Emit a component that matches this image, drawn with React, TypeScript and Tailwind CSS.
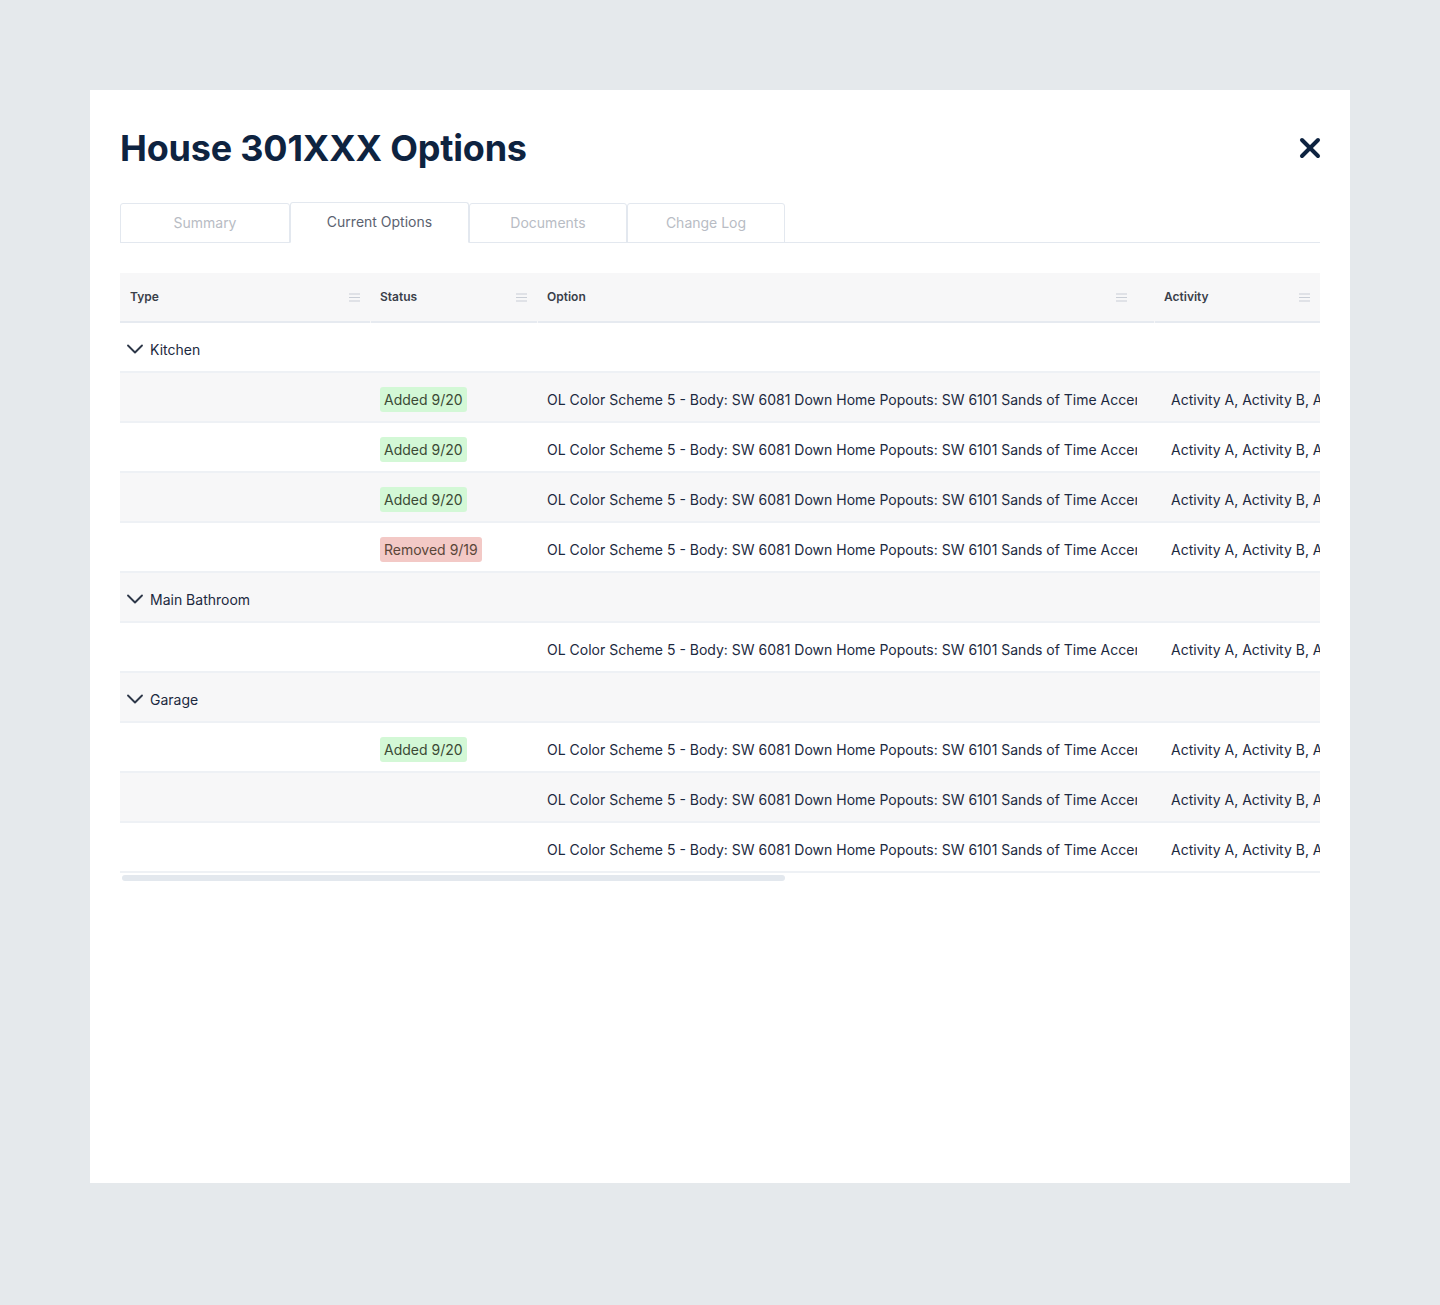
import { ChevronDown, X } from 'lucide-react'

type Row = { status?: 'added' | 'removed'; date?: string }
type Group = { name: string; rows: Row[] }

const OPTION =
  'OL Color Scheme 5 - Body: SW 6081 Down Home Popouts: SW 6101 Sands of Time Accent: SW 7019 Gauntlet Gray Trim: SW 7006 Extra White'
const ACTIVITY = 'Activity A, Activity B, Activity C'

const groups: Group[] = [
  {
    name: 'Kitchen',
    rows: [
      { status: 'added', date: '9/20' },
      { status: 'added', date: '9/20' },
      { status: 'added', date: '9/20' },
      { status: 'removed', date: '9/19' },
    ],
  },
  { name: 'Main Bathroom', rows: [{}] },
  { name: 'Garage', rows: [{ status: 'added', date: '9/20' }, {}, {}] },
]

const tabs = [
  { label: 'Summary', w: 'w-[170px]' },
  { label: 'Current Options', w: 'w-[179px]', active: true },
  { label: 'Documents', w: 'w-[158px]' },
  { label: 'Change Log', w: 'w-[158px]' },
]

function MenuIcon() {
  return (
    <svg width="11" height="9" viewBox="0 0 11 9" className="text-[#c9ced6]">
      <path d="M0 1h11M0 4.5h11M0 8h11" stroke="currentColor" strokeWidth="1.2" />
    </svg>
  )
}

function Badge({ status, date }: Row) {
  if (!status) return null
  return status === 'added' ? (
    <span className="inline-block rounded-[3px] bg-[#d3f8d6] px-[4px] py-[3px] text-[14px] leading-[19px] text-[#3c4a35]">
      Added {date}
    </span>
  ) : (
    <span className="inline-block rounded-[3px] bg-[#f3c9c6] px-[4px] py-[3px] text-[14px] leading-[19px] text-[#5a4639]">
      Removed {date}
    </span>
  )
}

export default function App() {
  let stripe = 0
  return (
    <div
      className="min-h-[1305px] bg-[#e5e9ec] pt-[90px] pl-[90px]"
      style={{ fontFamily: 'Inter, "Noto Sans", sans-serif' }}
    >
      <div className="h-[1093px] w-[1260px] bg-white px-[30px] pt-[36px]">
        <div className="flex items-center justify-between">
          <h1 className="text-[36px] font-bold leading-[44px] tracking-[-0.2px] text-[#0e2340]">
            House 301XXX Options
          </h1>
          <X className="mr-[-6px] h-[32px] w-[32px] text-[#0e2340]" strokeWidth={3} />
        </div>

        <div className="mt-[32px] flex items-end border-b border-[#e3e8ef]">
          {tabs.map((t) => (
            <div
              key={t.label}
              className={`${t.w} mb-[-1px] flex items-center justify-center rounded-t-[3px] border border-[#e3e8ef] pb-[2px] text-[14px] ${
                t.active
                  ? 'h-[41px] border-b-white text-[#5b6270]'
                  : 'h-[40px] text-[#b8bcc4]'
              }`}
            >
              {t.label}
            </div>
          ))}
        </div>

        <div className="mt-[30px] overflow-hidden">
          <div className="w-[1200px]">
            <div className="flex h-[50px] bg-[#f7f7f8] text-[12px] font-semibold text-[#3a3f4a]">
              <div className="flex w-[250px] shrink-0 items-center justify-between border-b-2 border-[#e6eaf0] pl-[10px] pr-[10px]">
                <span>Type</span>
                <MenuIcon />
              </div>
              <div className="ml-[1px] flex w-[166px] shrink-0 items-center justify-between border-b-2 border-[#e6eaf0] pl-[9px] pr-[10px]">
                <span>Status</span>
                <MenuIcon />
              </div>
              <div className="ml-[1px] flex w-[616px] shrink-0 items-center justify-between border-b-2 border-[#e6eaf0] pl-[9px] pr-[27px]">
                <span>Option</span>
                <MenuIcon />
              </div>
              <div className="ml-[1px] flex w-[165px] shrink-0 items-center justify-between border-b-2 border-[#e6eaf0] pl-[9px] pr-[10px]">
                <span>Activity</span>
                <MenuIcon />
              </div>
            </div>

            {groups.map((g) => {
              const gBg = stripe++ % 2 === 0 ? 'bg-white' : 'bg-[#f7f7f8]'
              return (
                <div key={g.name}>
                  <div
                    className={`flex h-[50px] items-center border-b-2 border-[#eef1f5] pl-[1px] pt-[4px] text-[14px] text-[#1c2940] ${gBg}`}
                  >
                    <ChevronDown className="h-[28px] w-[28px] text-[#2d3748]" strokeWidth={1.6} />
                    <span className="ml-[1px]">{g.name}</span>
                  </div>
                  {g.rows.map((r, i) => {
                    const bg = stripe++ % 2 === 0 ? 'bg-white' : 'bg-[#f7f7f8]'
                    return (
                      <div
                        key={i}
                        className={`flex h-[50px] items-center border-b-2 border-[#eef1f5] pt-[4px] text-[14px] text-[#1c2940] ${bg}`}
                      >
                        <div className="w-[250px] shrink-0" />
                        <div className="w-[167px] shrink-0 pl-[10px]">
                          <Badge {...r} />
                        </div>
                        <div className="w-[617px] shrink-0 pl-[10px]">
                          <div className="w-[590px] overflow-hidden whitespace-nowrap">{OPTION}</div>
                        </div>
                        <div className="shrink-0 whitespace-nowrap pl-[17px]">{ACTIVITY}</div>
                      </div>
                    )
                  })}
                </div>
              )
            })}
          </div>
          <div className="ml-[2px] mt-[2px] h-[6px] w-[663px] rounded-full bg-[#e3e8ee]" />
        </div>
      </div>
    </div>
  )
}
